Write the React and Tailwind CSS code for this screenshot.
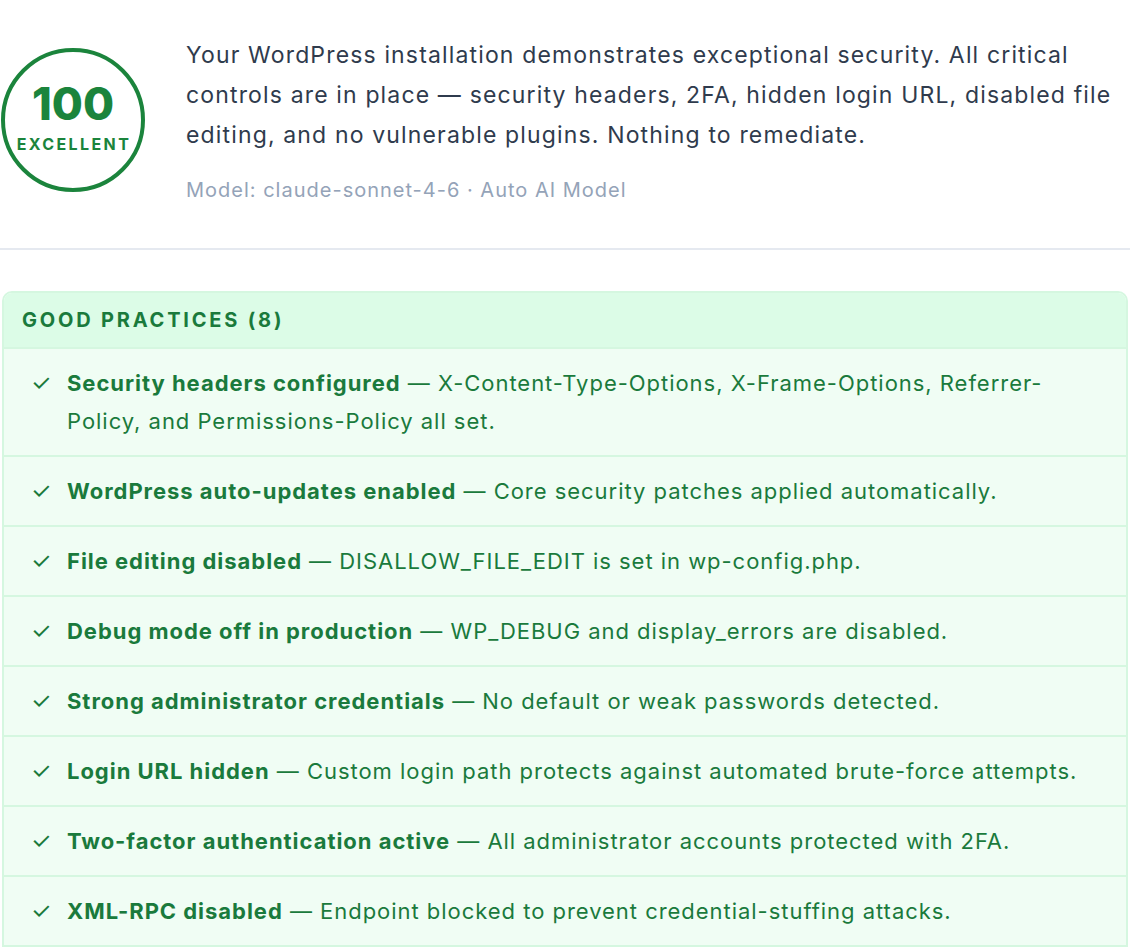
const practices = [
  {
    title: "Security headers configured",
    text: "X-Content-Type-Options, X-Frame-Options, Referrer-Policy, and Permissions-Policy all set.",
  },
  { title: "WordPress auto-updates enabled", text: "Core security patches applied automatically." },
  { title: "File editing disabled", text: "DISALLOW_FILE_EDIT is set in wp-config.php." },
  { title: "Debug mode off in production", text: "WP_DEBUG and display_errors are disabled." },
  { title: "Strong administrator credentials", text: "No default or weak passwords detected." },
  { title: "Login URL hidden", text: "Custom login path protects against automated brute-force attempts." },
  { title: "Two-factor authentication active", text: "All administrator accounts protected with 2FA." },
  { title: "XML-RPC disabled", text: "Endpoint blocked to prevent credential-stuffing attacks." },
];

const ScoreRing = () => {
  return (
    <div className="w-[144px] h-[144px] shrink-0 rounded-full border-[4px] border-[#1b843c] flex flex-col items-center justify-center text-[#1b843c]">
      <div className="text-[45px] font-extrabold leading-none -mt-[6px]">100</div>
      <div className="text-[16px] font-bold tracking-[0.15em] leading-none mt-[10px] pl-[2px]">EXCELLENT</div>
    </div>
  );
};

export default function App() {
  return (
    <div className="w-[1130px] min-h-[950px] bg-white overflow-hidden" style={{ fontFamily: "Inter, 'Noto Sans', sans-serif" }}>
      <div className="flex items-center gap-[41px] pl-[1px] pt-[35px] pb-[44px] border-b-2 border-[#e5e9f0]">
        <ScoreRing />
        <div>
          <p className="text-[23px] leading-[40px] tracking-[0.05em] text-[#2f3b4d]">
            Your WordPress installation demonstrates exceptional security. All critical controls are in place — security headers, 2FA, hidden login URL, disabled file editing, and no vulnerable plugins. Nothing to remediate.
          </p>
          <p className="mt-[21px] text-[20px] leading-[28px] tracking-[0.05em] text-[#94a3b8]">Model: claude-sonnet-4-6 · Auto AI Model</p>
        </div>
      </div>

      <div className="mt-[41px] mx-[2px] rounded-t-[10px] border-2 border-[#d5f7e0] overflow-hidden">
        <div className="bg-[#dcfce7] h-[54px] flex items-center px-[18px] text-[20px] font-bold tracking-[0.14em] text-[#1a7a3c]">
          GOOD PRACTICES (8)
        </div>
        {practices.map((p) => (
          <div key={p.title} className="flex gap-[16px] bg-[#f0fdf4] border-t-2 border-[#d5f7e0] pl-[27px] pr-[30px] py-[15px] text-[22px] leading-[38px] tracking-[0.044em] text-[#1a7a3c]">
            <span className="w-[20px] shrink-0 text-[23px]">✓</span>
            <p>
              <span className="font-bold">{p.title}</span> — {p.text}
            </p>
          </div>
        ))}
      </div>
    </div>
  );
}
